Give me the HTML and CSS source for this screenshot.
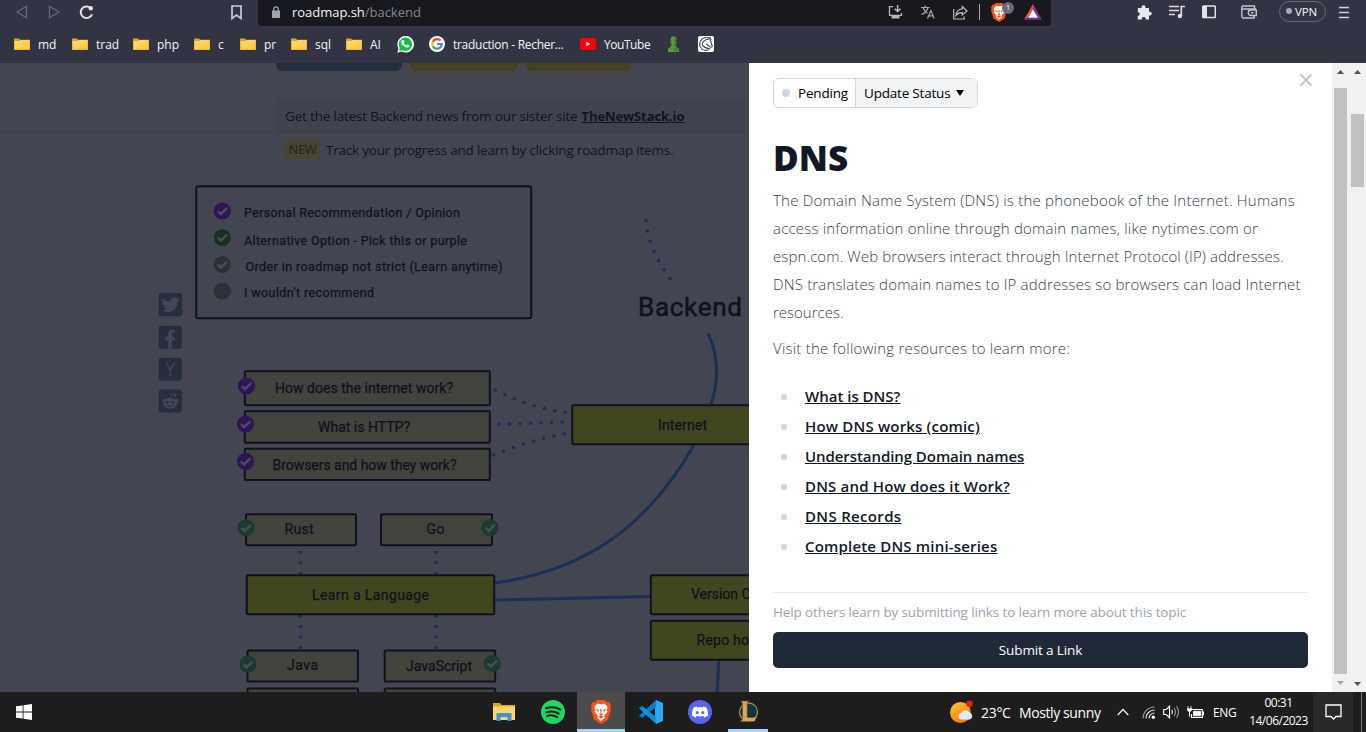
FILE: index.html
```html
<!DOCTYPE html>
<html lang="en">
<head>
<meta charset="utf-8">
<title>roadmap.sh/backend</title>
<link rel="stylesheet" href="styles.css">
</head>
<body>
<svg class="defs" width="0" height="0" aria-hidden="true">
  <defs>
    <linearGradient id="fold" x1="0" y1="0" x2="1" y2="1"><stop offset="0" stop-color="#ffe07a"/><stop offset="1" stop-color="#fcc43c"/></linearGradient>
    <linearGradient id="sun" x1="0" y1="0" x2="0.6" y2="1"><stop offset="0" stop-color="#ffc52b"/><stop offset="1" stop-color="#f37b12"/></linearGradient>
    <symbol id="folder" viewBox="0 0 16 16"><path d="M0 2.6h5l1 1.2h10V14H0z" fill="#e2a21b"/><path d="M.6 5h5l1-1h9V13.6H.6z" fill="url(#fold)"/></symbol>
    <symbol id="lion" viewBox="0 0 20 24"><path d="M6 0h8l2 2.3 2-.2 2 3-.6 2L20 9l-3 10.5L10 24 3 19.500 0 9l.6-2L0 5l2-3 2 .3z" fill="#fb5214"/><path d="M10 4.200l3.500-.8 3 3.200-.5 3.500.3 2-3 3.700.3 2.200L10 21l-3.600-3 .3-2.200-3-3.700.3-2-.5-3.500 3-3.200z" fill="#fff"/><path d="M4.500 8.800l3.500 1.300-1 2zM15.500 8.800L12 10.100l1 2zM9.200 9h1.600l-.4 4.600 1.600 1-2 1.500-2-1.500 1.600-1zM7.200 16.500L10 15.800l2.800.7L10 18.800z" fill="#fb5214"/></symbol>
    <symbol id="check" viewBox="-9 -9 18 18"><circle r="8.600"/><path d="M-4.600.1L-1.500 3 4.800-2.800" fill="none" stroke="#4a4c58" stroke-width="2.500"/></symbol>
  </defs>
</svg>

<header class="chrome">
  <div class="toolbar">
    <svg class="ic back" width="12" height="14" viewBox="0 0 12 14"><path d="M10.500 1.200v11.600L1.200 7z" fill="none" stroke="#646674" stroke-width="1.300"/></svg>
    <svg class="ic fwd" width="12" height="14" viewBox="0 0 12 14"><path d="M1.500 1.200v11.600L10.800 7z" fill="none" stroke="#646674" stroke-width="1.300"/></svg>
    <svg class="ic reload" width="15" height="15" viewBox="0 0 15 15"><path d="M13 9.300A5.800 5.800 0 1 1 11.500 3" fill="none" stroke="#e3e3e6" stroke-width="2"/><circle cx="11.800" cy="3.200" r="2.200" fill="#e3e3e6"/></svg>
    <svg class="ic mark" width="11" height="15" viewBox="0 0 11 15"><path d="M1 1h9v12.500L5.500 10 1 13.500z" fill="none" stroke="#c9cad0" stroke-width="1.700"/></svg>
    <div class="omnibox">
      <svg class="lock" width="8" height="12" viewBox="0 0 8 12"><path d="M0 4.500h8V12H0z" fill="#a0a2ad"/><path d="M1.800 5V3a2.200 2.200 0 0 1 4.400 0v2" fill="none" stroke="#a0a2ad" stroke-width="1.300"/></svg>
      <span class="url">roadmap.sh<span class="path">/backend</span></span>
      <svg class="o-install" width="15" height="14" viewBox="0 0 15 14"><path d="M5 1.700H1.500v8.600h12V8" fill="none" stroke="#b9bac0" stroke-width="1.300"/><path d="M3.500 11h8v2.500h-8z" fill="#b9bac0"/><path d="M9.600 0v6M6.700 3.700l2.900 2.800 2.900-2.800" fill="none" stroke="#b9bac0" stroke-width="1.500"/></svg>
      <svg class="o-trans" width="14" height="14" viewBox="0 0 14 14"><path d="M0 2.500h8.500M4.200.5v2M2 2.500c1 3 3 5 4.500 6M7 2.500C6 6 3 8.500.5 9.500M6.500 13.500l3.300-8 3.400 8M7.700 10.800h4.200" fill="none" stroke="#a9aab0" stroke-width="1.200"/></svg>
      <svg class="o-share" width="15" height="15" viewBox="0 0 15 15"><path d="M.7 4v10h10.500v-2.500" fill="none" stroke="#b9bac0" stroke-width="1.200"/><path d="M9.300 1.500L14 6 9.300 10V7.700C6.500 7.600 4.500 8.500 3 10.500c.3-4 2.500-6.300 6.300-6.700z" fill="none" stroke="#b9bac0" stroke-width="1.200"/></svg>
      <span class="sep"></span>
      <span class="shield"><svg width="16" height="19"><use href="#lion"/></svg><span class="count">1</span></span>
      <svg class="bat" width="18" height="16" viewBox="0 0 18 16"><path d="M9 0L0 16l4-2.300 5-7.800z" fill="#f5512b"/><path d="M9 0l9 16-4-2.300-5-7.800z" fill="#942d7d"/><path d="M0 16h18l-4-2.300H4z" fill="#5b2fa0"/><path d="M9 5.500l5 8.300H4z" fill="#fff"/></svg>
    </div>
    <svg class="ic puzzle" width="15" height="15" viewBox="0 0 15 15"><path d="M1 3h3.700a2 2 0 1 1 3.600 0H12v3.700a2 2 0 1 1 0 3.700V14.500H8.700a2 2 0 1 0-3.800 0H.7V11a2 2 0 1 0 0-4z" fill="#e9e9eb"/></svg>
    <svg class="ic music" width="16" height="14" viewBox="0 0 16 14"><path d="M0 1.500h10M0 5.500h10M0 9.500h6M12.300 11V1.500H16" fill="none" stroke="#dcdce0" stroke-width="1.700"/><circle cx="10.900" cy="11" r="2.200" fill="#dcdce0"/></svg>
    <svg class="ic side" width="14" height="14" viewBox="0 0 14 14"><rect x=".7" y="1" width="12.600" height="11.600" rx="1" fill="none" stroke="#e4e4e7" stroke-width="1.500"/><path d="M1 1h4v12H1z" fill="#e4e4e7"/></svg>
    <svg class="ic wallet" width="16" height="14" viewBox="0 0 16 14"><path d="M13.500 4V1H2.200A1.500 1.500 0 0 0 .8 2.500V11A1.700 1.700 0 0 0 2.500 13h10.700v-2M1 4h14" fill="none" stroke="#c3c4ca" stroke-width="1.400"/><path d="M15.300 5v5.500H10a2.700 2.700 0 0 1 0-5.500zM10 7.800h2.500" fill="none" stroke="#c3c4ca" stroke-width="1.400"/></svg>
    <span class="vpn"><i></i>VPN</span>
    <svg class="ic menu" width="10" height="13" viewBox="0 0 10 13"><path d="M0 1.500h10M0 6.500h10M0 11.500h10" stroke="#cfd0d5" stroke-width="1.600"/></svg>
  </div>
  <nav class="bookmarks">
    <a><svg width="16" height="16"><use href="#folder"/></svg>md</a>
    <a><svg width="16" height="16"><use href="#folder"/></svg>trad</a>
    <a><svg width="16" height="16"><use href="#folder"/></svg>php</a>
    <a><svg width="16" height="16"><use href="#folder"/></svg>c</a>
    <a><svg width="16" height="16"><use href="#folder"/></svg>pr</a>
    <a><svg width="16" height="16"><use href="#folder"/></svg>sql</a>
    <a><svg width="16" height="16"><use href="#folder"/></svg>AI</a>
    <a><svg width="17" height="17" viewBox="0 0 17 17"><path d="M.3 16.700l1.200-4.300A8.300 8.300 0 1 1 4.700 15.500z" fill="#fff"/><path d="M2 15l.8-3A6.700 6.700 0 1 1 5.200 14.200z" fill="#12c143"/><path d="M5.500 4.300c.9-.5 1.300.1 1.700 1.300.2.6-.6.900-.5 1.200.6 1.200 1.500 2 2.800 2.600.4.200.8-1 1.300-.8l1.600.8c.5.300-.1 1.700-1 2-3 .8-7.700-3-7.300-5.700.1-.6.700-1.100 1.400-1.400z" fill="#fff"/></svg></a>
    <a class="google"><svg width="16" height="16" viewBox="0 0 16 16"><circle cx="8" cy="8" r="8" fill="#fff"/><g fill="none" stroke-width="2.200"><path d="M11.600 4.600A4.800 4.800 0 0 0 3.800 5.800" stroke="#ea4335"/><path d="M3.800 5.800a4.800 4.800 0 0 0 0 4.500" stroke="#fbbc05"/><path d="M3.800 10.300A4.800 4.800 0 0 0 11 11.700" stroke="#34a853"/><path d="M8 8h4.800a4.700 4.700 0 0 1-1.800 3.700" stroke="#4285f4"/></g></svg>traduction - Recher...</a>
    <a class="yt"><svg width="16" height="16" viewBox="0 0 16 16"><rect y="2" width="16" height="12" rx="3" fill="#f00"/><path d="M6.400 5.700v4.600L10.300 8z" fill="#fff"/></svg>YouTube</a>
    <a><svg width="13" height="16" viewBox="0 0 13 16"><g fill="#619a3a"><circle cx="6.500" cy="3.200" r="2.900"/><path d="M3.300 6h6.400v1.600H8.300c.2 2.300 1 3.500 3 5H1.700c2-1.500 2.800-2.700 3-5H3.300z"/><path d="M1 12.300h11V16H1z"/></g><path d="M6.500.3v15.700H12v-3.700l-3-2L8.300 7l1-3z" fill="#3f6f2a" opacity=".45"/></svg></a>
    <a><svg width="16" height="16" viewBox="0 0 16 16"><rect width="16" height="16" rx="2" fill="#fff"/><path d="M13.500 3.500C10-.3 2.800 1.500 1.700 7.500.9 12.300 6 15.500 10.500 14M4 9.500C4 6 7 3.300 10.300 3.200l1.600-1.500c.3 3 1.600 6 2.400 8.500-.9 1.500-2 1.200-3.300-.2L8.300 8M4.500 9.500c2.500 2.500 5 3.300 8 3.500" fill="none" stroke="#444" stroke-width="1.100"/></svg></a>
  </nav>
</header>

<main class="viewport">
  <section class="page">
    <div class="actions"><span class="btn slate"></span><span class="btn gold w1"></span><span class="btn gold w2"></span></div>
    <div class="news">
      <div class="rule"></div>
      <div class="news-box">
        <p class="row top"><span class="t-news">Get the latest Backend news from our sister site</span> <a>TheNewStack.io</a></p>
        <p class="row"><span class="new">NEW</span><span class="t-track">Track your progress and learn by clicking roadmap items.</span></p>
      </div>
    </div>
    <svg class="map" width="749" height="526" viewBox="0 166 749 526">
      <g class="line">
        <path d="M708 333C717 353 720 378 711 404"/>
        <path d="M694 445C650 522 590 570 495 583"/>
        <path d="M495 600L650 596.500"/>
        <path d="M718.700 660L717.300 692"/>
      </g>
      <g class="dots">
        <path d="M646 220.700Q649 251 670.500 279"/>
        <path d="M495.300 389.700Q530 408 566 412.600"/>
        <path d="M499 424.400L563 422"/>
        <path d="M493.700 455Q530 440 565.500 433.500"/>
        <path d="M300.500 552.300v22M300.500 616v33M436 552.300v22M436 616v33"/>
      </g>
      <g class="box">
        <rect class="none" x="196.200" y="186.200" width="335" height="132" rx="2"/>
        <rect x="244.800" y="371.200" width="245" height="34" rx="1"/>
        <rect x="244.800" y="411.300" width="245" height="31.500" rx="1"/>
        <rect x="244.800" y="448.800" width="245" height="31.200" rx="1"/>
        <rect x="246" y="514.200" width="110" height="31" rx="1"/>
        <rect x="381" y="514.200" width="111" height="31" rx="1"/>
        <rect x="247.500" y="650.500" width="110.500" height="31" rx="1"/>
        <rect x="384.700" y="650.500" width="110.500" height="31" rx="1"/>
        <rect x="247.500" y="688.500" width="110.500" height="31" rx="1"/>
        <rect x="384.700" y="688.500" width="110.500" height="31" rx="1"/>
        <rect class="main" x="246.700" y="575.300" width="247.500" height="39" rx="1"/>
        <rect class="main" x="572.300" y="405.200" width="200" height="39" rx="1"/>
        <rect class="main" x="650.800" y="575.200" width="140" height="39" rx="1"/>
        <rect class="main" x="650.800" y="620.800" width="140" height="39" rx="1"/>
      </g>
      <g class="purple">
        <use href="#check" x="213.300" y="202" width="18" height="18"/>
        <use href="#check" x="237.500" y="377" width="18" height="18"/>
        <use href="#check" x="236.500" y="415" width="18" height="18"/>
        <use href="#check" x="236.500" y="452.300" width="18" height="18"/>
      </g>
      <g class="green">
        <use href="#check" x="213.300" y="228.500" width="18" height="18"/>
        <g class="teal">
        <use href="#check" x="237" y="518.700" width="18" height="18"/>
        <use href="#check" x="481" y="518.700" width="18" height="18"/>
        <use href="#check" x="239" y="655.200" width="18" height="18"/>
        <use href="#check" x="483.300" y="654.500" width="18" height="18"/>
        </g>
      </g>
      <g class="grey"><use href="#check" x="213.300" y="255.500" width="18" height="18"/><circle cx="222.300" cy="291" r="8.600"/></g>
      <g class="label small">
        <text x="244" y="217" textLength="216">Personal Recommendation / Opinion</text>
        <text x="244" y="245" textLength="223">Alternative Option - Pick this or purple</text>
        <text x="245.500" y="271" textLength="257">Order in roadmap not strict (Learn anytime)</text>
        <text x="244" y="297" textLength="130">I wouldn't recommend</text>
      </g>
      <g class="label">
        <text x="275" y="392.500" textLength="178">How does the internet work?</text>
        <text x="318" y="431.500" textLength="92">What is HTTP?</text>
        <text x="272.500" y="469.700" textLength="184">Browsers and how they work?</text>
        <text x="284.500" y="533.700" textLength="29">Rust</text>
        <text x="426.500" y="533.700" textLength="18">Go</text>
        <text x="312" y="600" textLength="117">Learn a Language</text>
        <text x="287" y="669.700" textLength="31">Java</text>
        <text x="406" y="671" textLength="66">JavaScript</text>
        <text x="658" y="430" textLength="49">Internet</text>
        <text x="691" y="598.500" textLength="59.500">Version C</text>
        <text x="696.500" y="645" textLength="52.500">Repo ho</text>
        <text class="big" x="638" y="316" textLength="104">Backend</text>
      </g>
      <g class="social">
        <rect x="158.800" y="293" width="23.400" height="23.200" rx="2.500"/>
        <rect x="158.800" y="325.700" width="23" height="23" rx="2.500"/>
        <rect x="158.800" y="357.800" width="23" height="22.700" rx="2.500"/>
        <rect x="158.800" y="389.500" width="23" height="23" rx="2.500"/>
        <path class="cut" transform="translate(161.500 295.500) scale(.76)" d="M23.950 4.570a10 10 0 0 1-2.820.77 4.960 4.960 0 0 0 2.160-2.720c-.95.550-2 .95-3.130 1.180a4.920 4.920 0 0 0-8.380 4.480C7.690 8.090 4.070 6.130 1.640 3.160a4.820 4.820 0 0 0-.67 2.480c0 1.700.87 3.210 2.190 4.100a4.900 4.900 0 0 1-2.230-.620v.060a4.920 4.920 0 0 0 3.950 4.830 5 5 0 0 1-2.210.080 4.940 4.940 0 0 0 4.600 3.420A9.870 9.870 0 0 1 0 19.540a14 14 0 0 0 7.550 2.210c9.050 0 14-7.500 14-13.980 0-.210 0-.420-.020-.630a9.940 9.940 0 0 0 2.460-2.550z"/>
        <path class="cut" d="M168.200 348.700v-8.500h-3.200v-3.500h3.200v-2.500c0-3.400 2-4.700 4.500-4.700 1.300 0 2.400.2 2.400.2v3h-1.500c-1.400 0-1.800.9-1.800 1.800v2.200h3.400l-.5 3.500h-2.900v8.500z"/>
        <path class="y" d="M166 362.500l4.200 7.500 4.200-7.500M170.200 370v6"/>
        <path class="cut" d="M162.500 400a1.900 1.900 0 0 1 2.500-.8c1.300-.7 2.800-1.100 4.500-1.200l1.200-4.300 3.200.7a1.400 1.400 0 1 1-.2 1l-2.300-.5-.9 3.100c1.700.1 3.200.5 4.500 1.200a1.900 1.900 0 1 1 2.400 2.900c.5 4-3.200 6.700-7.200 6.700s-7.700-2.700-7.200-6.700a1.900 1.900 0 0 1-.5-2.100z"/>
        <circle cx="167.300" cy="402.300" r="1.300"/><circle cx="173" cy="402.300" r="1.300"/><path class="smile" d="M167 405.700q3.200 1.900 6.300 0"/>
      </g>
    </svg>
  </section>

  <aside class="drawer">
    <div class="status-row">
      <div class="status"><span class="pending"><i></i>Pending</span><span class="update">Update Status<svg width="8" height="6" viewBox="0 0 8 6"><path d="M0 0h8L4 6z"/></svg></span></div>
      <svg class="close" width="14" height="14" viewBox="0 0 14 14"><path d="M1.500 1.500l11 11M12.500 1.500l-11 11" stroke="#c4c4c6" stroke-width="2"/></svg>
    </div>
    <h1>DNS</h1>
    <p class="copy">
      <span class="l1">The Domain Name System (DNS) is the phonebook of the Internet. Humans</span>
      <span class="l2">access information online through domain names, like nytimes.com or</span>
      <span class="l3">espn.com. Web browsers interact through Internet Protocol (IP) addresses.</span>
      <span class="l4">DNS translates domain names to IP addresses so browsers can load Internet</span>
      <span class="l5">resources.</span>
    </p>
    <p class="copy visit"><span class="l6">Visit the following resources to learn more:</span></p>
    <ul>
      <li><a>What is DNS?</a></li>
      <li class="wide"><a>How DNS works (comic)</a></li>
      <li class="tight"><a>Understanding Domain names</a></li>
      <li class="wide"><a>DNS and How does it Work?</a></li>
      <li class="wider"><a>DNS Records</a></li>
      <li class="wide"><a>Complete DNS mini-series</a></li>
    </ul>
    <p class="help"><span>Help others learn by submitting links to learn more about this topic</span></p>
    <div class="submit">Submit a Link</div>
  </aside>
  <div class="scroll inner"><svg width="7" height="4"><path d="M0 4h7L3.500 0z"/></svg><span class="thumb"></span><svg class="dim" width="7" height="4"><path d="M0 0h7L3.500 4z"/></svg></div>
  <div class="scroll outer"><svg width="7" height="4"><path d="M0 4h7L3.500 0z"/></svg><span class="thumb"></span><svg width="7" height="4"><path d="M0 0h7L3.500 4z"/></svg></div>
</main>

<footer class="taskbar">
  <svg class="win" width="16" height="16" viewBox="0 0 16 16"><path d="M0 2.300l6.700-.9v6.200H0zM7.500 1.300L16 .1v7.500H7.500zM0 8.400h6.700v6.200L0 13.700zM7.500 8.400H16v7.500l-8.500-1.200z" fill="#fff"/></svg>
  <div class="apps">
    <span><svg width="22" height="18" viewBox="0 0 22 18"><path d="M0 0h7l1.500 2H22v14H0z" fill="#e5a420"/><path d="M0 3.500h22V17H0z" fill="#ffd768"/><path d="M3.500 10h15v8h-4v-4h-7v4h-4z" fill="#3d93d6"/></svg></span>
    <span><svg width="24" height="24" viewBox="0 0 24 24"><circle cx="12" cy="12" r="12" fill="#1ed760"/><path d="M5 8.200c5-1.500 10.500-1 14.500 1.400M5.500 12.200c4.200-1.200 8.700-.7 12.200 1.400M6.200 15.900c3.500-1 7-.6 10 1.200" fill="none" stroke="#161a17" stroke-width="2" stroke-linecap="round"/></svg></span>
    <span class="active"><svg width="20" height="24"><use href="#lion"/></svg></span>
    <span><svg width="24" height="24" viewBox="0 0 24 24"><path d="M17 0l7 3v18l-7 3-1-6V6z" fill="#29a9f2"/><path d="M17 0v7L3.200 18 0 15.800z" fill="#0b7cc4"/><path d="M17 24v-7L3.200 6 0 8.200z" fill="#0f8fdc"/></svg></span>
    <span><svg width="24" height="24" viewBox="0 0 24 24"><circle cx="12" cy="12" r="12" fill="#5865f2"/><path d="M8.700 6.500l.6.900a13 13 0 0 1 5.400 0l.6-.9c1.300.2 2.200.6 3 1 1.300 2.500 2 5 1.700 8.200-1.200.9-2.400 1.500-3.700 1.800l-.9-1.400c-2 .6-4.800.6-6.800 0l-.9 1.400c-1.300-.3-2.500-.9-3.700-1.800-.3-3.200.4-5.700 1.700-8.200.8-.4 1.700-.8 3-1z" fill="#fff"/><ellipse cx="9.200" cy="12.600" rx="1.500" ry="1.700" fill="#5865f2"/><ellipse cx="14.800" cy="12.600" rx="1.500" ry="1.700" fill="#5865f2"/></svg></span>
    <span class="open"><svg width="22" height="24" viewBox="0 0 22 24"><circle cx="11.500" cy="12" r="9" fill="#0c3447" stroke="#a88a4a" stroke-width="1.300"/><path d="M4 1h7.500l-1.300 2v14.500H16l4-1-2.500 5H3.500l2-2.500V3.500z" fill="#d9a75a" stroke="#6d4a1e" stroke-width=".6"/></svg></span>
  </div>
  <svg class="weather" width="24" height="24" viewBox="0 0 24 24"><circle cx="10.500" cy="12.500" r="10.500" fill="url(#sun)"/><circle cx="19.500" cy="3.800" r="3.300" fill="#d2291d"/><path d="M11 19.500a3.300 3.300 0 0 1 .3-6.500 4.400 4.400 0 0 1 8-.5 3.600 3.600 0 0 1 .2 7z" fill="#dcebfd"/></svg>
  <span class="temp">23°C</span><span class="cond">Mostly sunny</span>
  <svg class="chev" width="12" height="8" viewBox="0 0 12 8"><path d="M.7 7L6 1.500 11.300 7" fill="none" stroke="#f0f0f0" stroke-width="1.300"/></svg>
  <svg class="wifi" width="13" height="13" viewBox="0 0 13 13"><g fill="none" stroke-width="1.200"><path d="M1 12.500A11.500 11.500 0 0 1 12.500 1" stroke="#999"/><path d="M4 12.500A8.500 8.500 0 0 1 12.500 4M7 12.500A5.500 5.500 0 0 1 12.500 7" stroke="#e8e8e8"/></g><circle cx="11.300" cy="11.300" r="1.700" fill="#fff"/></svg>
  <svg class="vol" width="17" height="14" viewBox="0 0 17 14"><path d="M.7 4.500h2.500L6.500 1.300v11.400L3.200 9.500H.7z" fill="none" stroke="#fff" stroke-width="1.200"/><path d="M8.700 5q1.500 2 0 4" fill="none" stroke="#fff" stroke-width="1.200"/><path d="M11 3q3 4 0 8M13.300 1q4.500 6 0 12" fill="none" stroke="#999" stroke-width="1.100"/></svg>
  <svg class="batt" width="17" height="13" viewBox="0 0 17 13"><path d="M4.500 3.500h10.800v8H4.500V8" fill="none" stroke="#fff" stroke-width="1.200"/><path d="M6.500 5.300h7v4.500h-7zM15.500 6h1.500v3h-1.500zM1 0v2.500M4 0v2.500" fill="#fff" stroke="#fff" stroke-width=".8"/><path d="M0 2.200h5v2L3 6v4.500H2V6L0 4.200z" fill="#fff"/></svg>
  <span class="lang">ENG</span>
  <div class="clock"><span class="c1">00:31</span><span class="c2">14/06/2023</span></div>
  <div class="notif"><svg width="17" height="17" viewBox="0 0 17 17"><path d="M1 1h15v11.500h-5L8.500 15 6 12.500H1z" fill="none" stroke="#fff" stroke-width="1.300"/></svg></div>
  <span class="peek"></span>
</footer>
</body>
</html>
```
FILE: styles.css
```css
* { box-sizing: border-box; }
body { margin: 0; width: 1366px; height: 732px; overflow: hidden; display: flex; flex-direction: column; font-family: "Open Sans", "Noto Sans", sans-serif; }
svg { display: block; flex: none; }
.defs { position: absolute; }
p, h1, ul { margin: 0; padding: 0; }

/* browser chrome */
.chrome { height: 63px; flex: none; background: #323443; color: #f4f4f6; }
.toolbar { height: 26px; display: flex; align-items: center; padding-left: 16px; }
.fwd { margin-left: 20px; }
.reload { margin-left: 19px; }
.mark { margin-left: 137px; }
.ic { position: relative; top: -1px; }
.omnibox { width: 793px; height: 26px; margin-left: 16px; padding-left: 14px; background: #17191f; border-radius: 0 0 4px 4px; display: flex; align-items: center; padding-bottom: 2px; }
.url { width: 128px; margin-left: 12px; font-size: 13px; letter-spacing: -.03px; white-space: nowrap; }
.path { color: #85868d; }
.o-install { margin-left: 468px; }
.o-trans { margin-left: 18px; }
.o-share { margin-left: 18px; }
.sep { width: 1px; height: 16px; margin-left: 11px; background: #aaabb0; }
.shield { position: relative; margin-left: 11px; }
.count { position: absolute; left: 11px; top: -1px; width: 12px; height: 12px; border-radius: 6px; background: #666977; color: #fff; font-size: 7px; line-height: 11px; text-align: center; }
.bat { margin-left: 17px; }
.puzzle { margin-left: 86px; }
.music { margin-left: 17px; }
.side { margin-left: 17px; }
.wallet { margin-left: 25px; }
.vpn { display: flex; align-items: center; gap: 3px; width: 47px; height: 21px; margin: -4px 0 0 22px; padding-left: 6px; border: 1px solid #666978; border-radius: 11px; font-size: 11.500px; letter-spacing: -.1px; }
.vpn i { width: 6px; height: 6px; border-radius: 3px; background: #a6a8b8; }
.menu { margin-left: 13px; }
.bookmarks { height: 37px; display: grid; grid-template-columns: 58px 61px 61px 46px 51px 55px 51px 32px 151px 87px 31px 20px; padding-left: 14px; font-size: 12px; letter-spacing: 0; }
.bookmarks a { display: flex; align-items: center; gap: 8px; white-space: nowrap; height: 36px; }
.google { letter-spacing: -.28px; }
.yt { letter-spacing: -.45px; }

/* dimmed page */
.viewport { display: flex; height: 629px; flex: none; }
.page { width: 749px; overflow: hidden; background: #434650; color: #11141f; }
.actions { display: flex; gap: 8px; padding-left: 276px; height: 36px; }
.btn { height: 8px; border-radius: 0 0 6px 6px; background: #45401f; }
.slate { width: 126px; background: #262d3c; }
.w1 { width: 108px; }
.w2 { width: 105px; }
.news { display: flex; height: 67px; }
.rule { width: 276px; flex: none; height: 34px; border-bottom: 1px solid #3d404a; }
.news-box { width: 600px; flex: none; border: 1px solid #3e414b; border-radius: 5px; height: 67px; }
.row { height: 33px; display: flex; align-items: center; padding-left: 8px; font-size: 13.500px; white-space: nowrap; }
.top { background: #40434d; border-bottom: 1px solid #3d404a; height: 33px; }
.row a { margin-left: 4px; font-weight: 700; text-decoration: underline; font-size: 13px; letter-spacing: -.1px; }
.t-news { letter-spacing: -.18px; }
.t-track { letter-spacing: -.21px; }
.new { width: 35px; height: 19px; line-height: 19px; margin-right: 6px; border-radius: 2px; background: #47442f; color: #252320; text-align: center; font-size: 13px; letter-spacing: -.3px; }
.line path { fill: none; stroke: #1a2f58; stroke-width: 3; }
.dots path { fill: none; stroke: #1a2f58; stroke-width: 3.600; stroke-linecap: round; stroke-dasharray: 0 10.550; }
.box rect { fill: #42433c; stroke: #0f121e; stroke-width: 2; }
.box .none { fill: none; }
.box .main { fill: #42461e; }
.purple { fill: #2f1458; }
.green { fill: #18311f; }
.teal { fill: #1c3a2f; }
.grey { fill: #2e3037; }
.label { font-family: Roboto, "Open Sans", sans-serif; font-size: 14px; fill: #0f121e; stroke: #0f121e; stroke-width: .25; }
.small { font-size: 12.500px; }
.big { font-size: 26px; stroke-width: .5; }
.social { fill: #252d3e; }
.social .cut { fill: #434650; }
.y, .smile { fill: none; stroke: #434650; stroke-width: 1.500; }
.smile { stroke: #252d3e; stroke-width: 1; }

/* topic drawer */
.drawer { width: 583px; padding: 15px 24px 0; background: #fff; }
.status-row { display: flex; justify-content: space-between; height: 30px; }
.status { display: flex; width: 205px; height: 30px; border: 1px solid #d1d5db; border-radius: 6px; overflow: hidden; font-size: 13.500px; letter-spacing: -.2px; color: #000; }
.pending, .update { display: flex; align-items: center; white-space: nowrap; }
.pending { width: 82px; padding-left: 8px; border-right: 1px solid #d1d5db; }
.pending i { width: 8px; height: 8px; border-radius: 4px; margin-right: 8px; background: #d1d5db; }
.update { flex: 1; padding-left: 8px; background: #f3f4f6; }
.update svg { margin-left: 6px; }
.close { margin: -5px -5px 0 0; align-self: flex-start; }
h1 { height: 78px; padding-top: 25px; font-size: 35px; line-height: 50px; font-weight: 800; color: #111827; }
.copy { font-size: 15px; line-height: 28px; font-weight: 300; color: #374151; white-space: nowrap; }
.copy span { display: block; }
.l1, .l6 { letter-spacing: .22px; }
.l2 { letter-spacing: .2px; }
.l3 { letter-spacing: .11px; }
.l4 { letter-spacing: .165px; }
.visit { margin-top: 8px; }
ul { list-style: none; margin-top: 19px; height: 211px; }
li { height: 30px; line-height: 30px; padding-left: 32px; position: relative; font-size: 15px; font-weight: 600; color: #111827; white-space: nowrap; }
li::before { content: ""; position: absolute; left: 8px; top: 13px; width: 6px; height: 6px; border-radius: 3px; background: #d1d5db; }
li a { text-decoration: underline; }
.wide { letter-spacing: .18px; }
.wider { letter-spacing: .33px; }
.tight { letter-spacing: -.07px; }
.help { border-top: 1px solid #e5e7eb; height: 40px; line-height: 39px; font-size: 13.500px; letter-spacing: -.13px; color: #9ca3af; white-space: nowrap; }
.submit { height: 36px; line-height: 36px; border-radius: 5px; background: #1f2937; color: #fff; text-align: center; font-size: 13.500px; letter-spacing: -.13px; }
.scroll { width: 17px; background: #f1f1f1; display: flex; flex-direction: column; align-items: center; padding: 7px 0; }
.scroll svg { fill: #505050; }
.scroll .dim { fill: #a3a3a3; }
.thumb { width: 13px; background: #c1c1c1; }
.inner .thumb { margin: 14px 0 7px; height: 587px; }
.outer .thumb { margin: 40px 0 495px; height: 73px; flex: none; }

/* taskbar */
.taskbar { height: 40px; background: #1d1d1d; display: flex; align-items: center; color: #fff; white-space: nowrap; }
.win { margin-left: 16px; }
.apps { display: flex; height: 40px; margin-left: 447px; }
.apps span { width: 49px; height: 40px; display: flex; align-items: center; justify-content: center; }
.apps .active { width: 48px; margin-right: 1px; background: #4b4b4b; border-bottom: 3px solid #a3d5fb; padding-top: 3px; }
.apps .open { width: 40px; margin-left: 4px; border-bottom: 3px solid #a3d5fb; padding-top: 3px; }
.weather { margin-left: 182px; }
.temp { margin-left: 7px; width: 38px; font-size: 14px; letter-spacing: -.3px; }
.cond { width: 98px; font-size: 14px; letter-spacing: -.4px; }
.wifi { margin-left: 13px; }
.vol { margin-left: 8px; }
.batt { margin-left: 7px; }
.lang { margin-left: 9px; width: 36px; font-size: 12px; letter-spacing: -.3px; }
.clock { width: 59px; font-size: 12px; line-height: 18px; letter-spacing: -.5px; display: flex; flex-direction: column; align-items: center; }
.notif { width: 40px; height: 40px; margin-left: 5px; background: #292929; display: flex; align-items: center; justify-content: center; }
.peek { width: 1px; height: 40px; margin-left: 8px; background: #777; }
```
